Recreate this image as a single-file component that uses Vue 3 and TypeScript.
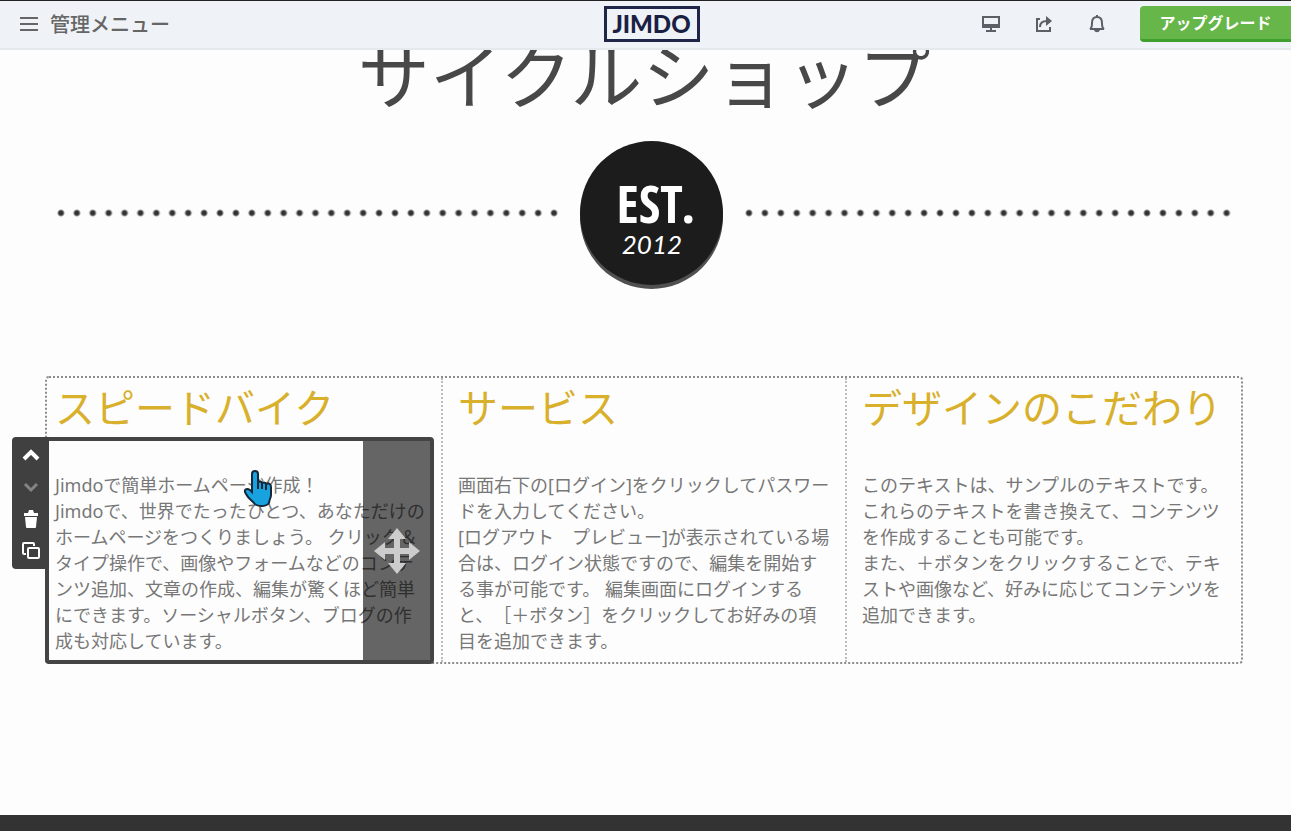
<script setup lang="ts">
interface Column {
  title: string
  lines: string[]
  selected: boolean
}

const columns: Column[] = [
  {
    title: 'スピードバイク',
    selected: true,
    lines: [
      'Jimdoで簡単ホームページ作成！',
      'Jimdoで、世界でたったひとつ、あなただけの',
      'ホームページをつくりましょう。 クリック＆',
      'タイプ操作で、画像やフォームなどのコンテ',
      'ンツ追加、文章の作成、編集が驚くほど簡単',
      'にできます。ソーシャルボタン、ブログの作',
      '成も対応しています。',
    ],
  },
  {
    title: 'サービス',
    selected: false,
    lines: [
      '画面右下の[ログイン]をクリックしてパスワー',
      'ドを入力してください。',
      '[ログアウト　プレビュー]が表示されている場',
      '合は、ログイン状態ですので、編集を開始す',
      'る事が可能です。 編集画面にログインする',
      'と、［＋ボタン］をクリックしてお好みの項',
      '目を追加できます。',
    ],
  },
  {
    title: 'デザインのこだわり',
    selected: false,
    lines: [
      'このテキストは、サンプルのテキストです。',
      'これらのテキストを書き換えて、コンテンツ',
      'を作成することも可能です。',
      'また、＋ボタンをクリックすることで、テキ',
      'ストや画像など、好みに応じてコンテンツを',
      '追加できます。',
    ],
  },
]
</script>

<template>
  <div class="page">
    <header class="topbar">
      <button type="button" class="menu">
        <svg class="menu-icon" viewBox="0 0 18 16" aria-hidden="true">
          <path d="M0 2h18M0 8h18M0 14h18" />
        </svg>
        <span>管理メニュー</span>
      </button>
      <a href="#" class="logo">JIMDO</a>
      <nav class="actions">
        <button type="button" class="icon-button" aria-label="プレビュー">
          <svg viewBox="0 0 20 20" aria-hidden="true">
            <path d="M2 3h16v10H2zM10 13v3M5 17h10" />
            <path class="solid" d="M2 10h16v3H2z" />
          </svg>
        </button>
        <button type="button" class="icon-button" aria-label="共有">
          <svg viewBox="0 0 20 20" aria-hidden="true">
            <path d="M6 5H3v12h13v-4M6 13c0-4 3-6 7-6" />
            <path class="solid" d="M12 2l6 5-6 5z" />
          </svg>
        </button>
        <button type="button" class="icon-button" aria-label="お知らせ">
          <svg viewBox="0 0 20 20" aria-hidden="true">
            <path d="M3 15c2-1 2-3 2-6 0-4 2-6 5-6s5 2 5 6c0 3 0 5 2 6z" />
            <path class="solid" d="M9 1h2v2H9zM7 16h6c-1 3-5 3-6 0z" />
          </svg>
        </button>
        <button type="button" class="upgrade">アップグレード</button>
      </nav>
    </header>

    <main class="content">
      <h1>サイクルショップ</h1>

      <div class="divider">
        <span class="dots dots-left"></span>
        <div class="badge">
          <span class="est">EST.</span>
          <span class="year">2012</span>
        </div>
        <span class="dots dots-right"></span>
      </div>

      <div class="columns">
        <section v-for="column in columns" :key="column.title" class="column">
          <h2>{{ column.title }}</h2>
          <div class="block">
            <p>
              <span v-for="line in column.lines" :key="line" class="line">{{ line }}</span>
            </p>
            <template v-if="column.selected">
              <div class="frame">
                <button type="button" class="drag" aria-label="移動">
                  <svg viewBox="0 0 46 46" aria-hidden="true">
                    <path
                      d="M23 0l9 11h-6v9h9v-6l11 9-11 9v-6h-9v9h6l-9 11-9-11h6v-9h-9v6L0 23l11-9v6h9v-9h-6z"
                    />
                  </svg>
                </button>
              </div>
              <div class="tools">
                <button type="button" aria-label="上へ">
                  <svg viewBox="0 0 20 20" aria-hidden="true"><path class="thick" d="M3 14l7-7 7 7" /></svg>
                </button>
                <button type="button" class="dim" aria-label="下へ">
                  <svg viewBox="0 0 20 20" aria-hidden="true"><path class="medium" d="M4 7l6 6 6-6" /></svg>
                </button>
                <button type="button" aria-label="削除">
                  <svg viewBox="0 0 20 20" aria-hidden="true">
                    <path class="solid" d="M3 4h4l1-3h4l1 3h4v3H3zM4 8h12l-1 10a1 1 0 0 1-1 1H6a1 1 0 0 1-1-1z" />
                  </svg>
                </button>
                <button type="button" aria-label="コピー">
                  <svg viewBox="0 0 20 20" aria-hidden="true">
                    <rect x="7" y="7" width="11" height="10" rx="1" />
                    <path d="M5 13H3a1 1 0 0 1-1-1V3a1 1 0 0 1 1-1h9a1 1 0 0 1 1 1v2" />
                  </svg>
                </button>
              </div>
              <svg class="cursor" viewBox="0 0 30 38" aria-hidden="true">
                <path
                  d="M9 4c0-4 6-4 6 0v8c2-1 4 0 4 1 2-1 4 0 4 1 3-1 5 0 5 3v8c0 3-2 5-2 8-3 4-12 4-15 0-3-3-6-5-8-9-3-5 1-6 4-4l2 2z"
                />
                <path class="knuckles" d="M15 12v7M19 13v6M23 14v6" />
              </svg>
            </template>
          </div>
        </section>
      </div>
    </main>
    <footer class="footer"></footer>
  </div>
</template>

<style>
body {
  margin: 0;
  background: #fdfdfd;
}
</style>

<style scoped>
.page {
  display: flex;
  flex-direction: column;
  min-height: 100vh;
  color: #777;
  font-family: "Noto Sans", "Noto Sans CJK JP", sans-serif;
  text-spacing-trim: space-all;
}

button {
  display: flex;
  align-items: center;
  justify-content: center;
  margin: 0;
  padding: 0;
  border: 0;
  background: none;
  color: inherit;
  font-family: "Noto Sans CJK JP", sans-serif;
}

svg {
  display: block;
  fill: none;
  stroke: currentColor;
  stroke-width: 2;
}

.solid {
  fill: currentColor;
  stroke: none;
}

.topbar {
  position: sticky;
  top: 0;
  z-index: 2;
  display: grid;
  grid-template-columns: 1fr 96px 1fr;
  align-items: center;
  box-sizing: border-box;
  height: 50px;
  padding: 0 0 2px 12px;
  border-top: 1px solid #222;
  border-bottom: 2px solid #e6e9ec;
  background: #eff2f6;
}

.menu {
  gap: 12px;
  justify-self: start;
  padding-left: 8px;
  color: #666;
  font-size: 20px;
  font-weight: 500;
  line-height: 32px;
}

.menu-icon {
  width: 18px;
  height: 16px;
}

.logo {
  box-sizing: border-box;
  width: 96px;
  height: 36px;
  border: 3px solid #20264a;
  color: #1a2044;
  font-family: Lato, sans-serif;
  font-size: 24px;
  font-weight: 900;
  line-height: 30px;
  text-align: center;
  text-decoration: none;
}

.actions {
  display: flex;
  align-items: center;
  justify-content: flex-end;
  gap: 33px;
  color: #5c6066;
}

.icon-button svg {
  width: 20px;
  height: 20px;
}

.upgrade {
  width: 151px;
  height: 36px;
  box-sizing: border-box;
  border-bottom: 3px solid #3f9f2f;
  border-radius: 4px 0 0 4px;
  background: #66b64a;
  color: #fff;
  font-size: 16px;
  font-weight: 700;
}

.content {
  padding: 0 48px 0 45px;
}

h1 {
  margin: 0;
  color: #484848;
  font-size: 72px;
  font-weight: 400;
  line-height: 50px;
  text-align: center;
}

.divider {
  display: flex;
  align-items: center;
  gap: 18px;
  margin-top: 41px;
  padding: 0 8px;
}

.dots {
  height: 8px;
  background: radial-gradient(circle, #333 2px, transparent 4px) 0 0 / 16px 8px round;
}

.dots-left {
  flex: 32;
}

.dots-right {
  flex: 31;
}

.badge {
  display: flex;
  flex-direction: column;
  align-items: center;
  box-sizing: border-box;
  width: 143px;
  height: 144px;
  padding-top: 36px;
  border-radius: 50%;
  background: #1c1c1c;
  box-shadow: 0 4px 0 #505050;
  color: #fff;
}

.est {
  padding-left: 8px;
  font-family: "Liberation Sans Narrow", "Open Sans Condensed", "DejaVu Sans Condensed", sans-serif;
  font-size: 52px;
  font-weight: 700;
  line-height: 52px;
}

.year {
  font-family: Lato, sans-serif;
  font-size: 26px;
  font-style: italic;
  line-height: 30px;
}

.columns {
  display: grid;
  grid-template-columns: 394fr 404fr 396fr;
  margin-top: 91px;
  border: 2px dotted #8c8c8c;
  border-radius: 4px;
}

.column {
  padding: 0 7px 0 8px;
}

.column + .column {
  padding-left: 15px;
  border-left: 2px dotted #bbb;
}

h2 {
  margin: 0;
  color: #d9b02c;
  font-size: 40px;
  font-weight: 400;
  line-height: 60px;
  white-space: nowrap;
}

.block {
  position: relative;
  padding: 34px 0 8px;
}

p {
  margin: 0;
  font-size: 18px;
  line-height: 26px;
}

.line {
  display: block;
  white-space: nowrap;
}

.frame {
  position: absolute;
  inset: -1px 0 -2px -10px;
  display: flex;
  justify-content: flex-end;
  border: 4px solid #444;
  border-radius: 4px;
}

.drag {
  width: 67px;
  background: rgba(0, 0, 0, 0.6);
  color: #ccc;
}

.drag svg {
  width: 46px;
  height: 46px;
  fill: currentColor;
  stroke: none;
}

.tools {
  position: absolute;
  top: -1px;
  left: -43px;
  display: grid;
  grid-auto-rows: 32px;
  width: 37px;
  padding: 2px 0;
  border-radius: 4px 0 0 4px;
  background: #404040;
  color: #fff;
}

.tools svg {
  width: 20px;
  height: 20px;
}

.tools .thick {
  stroke-width: 4;
}

.tools .medium {
  stroke-width: 3;
}

.tools .dim {
  color: #858585;
}

.cursor {
  position: absolute;
  top: 32px;
  left: 188px;
  width: 30px;
  height: 38px;
  fill: #18a3e0;
  stroke: #14283a;
}

.knuckles {
  fill: none;
}

.footer {
  height: 16px;
  margin-top: auto;
  background: #333;
}
</style>
